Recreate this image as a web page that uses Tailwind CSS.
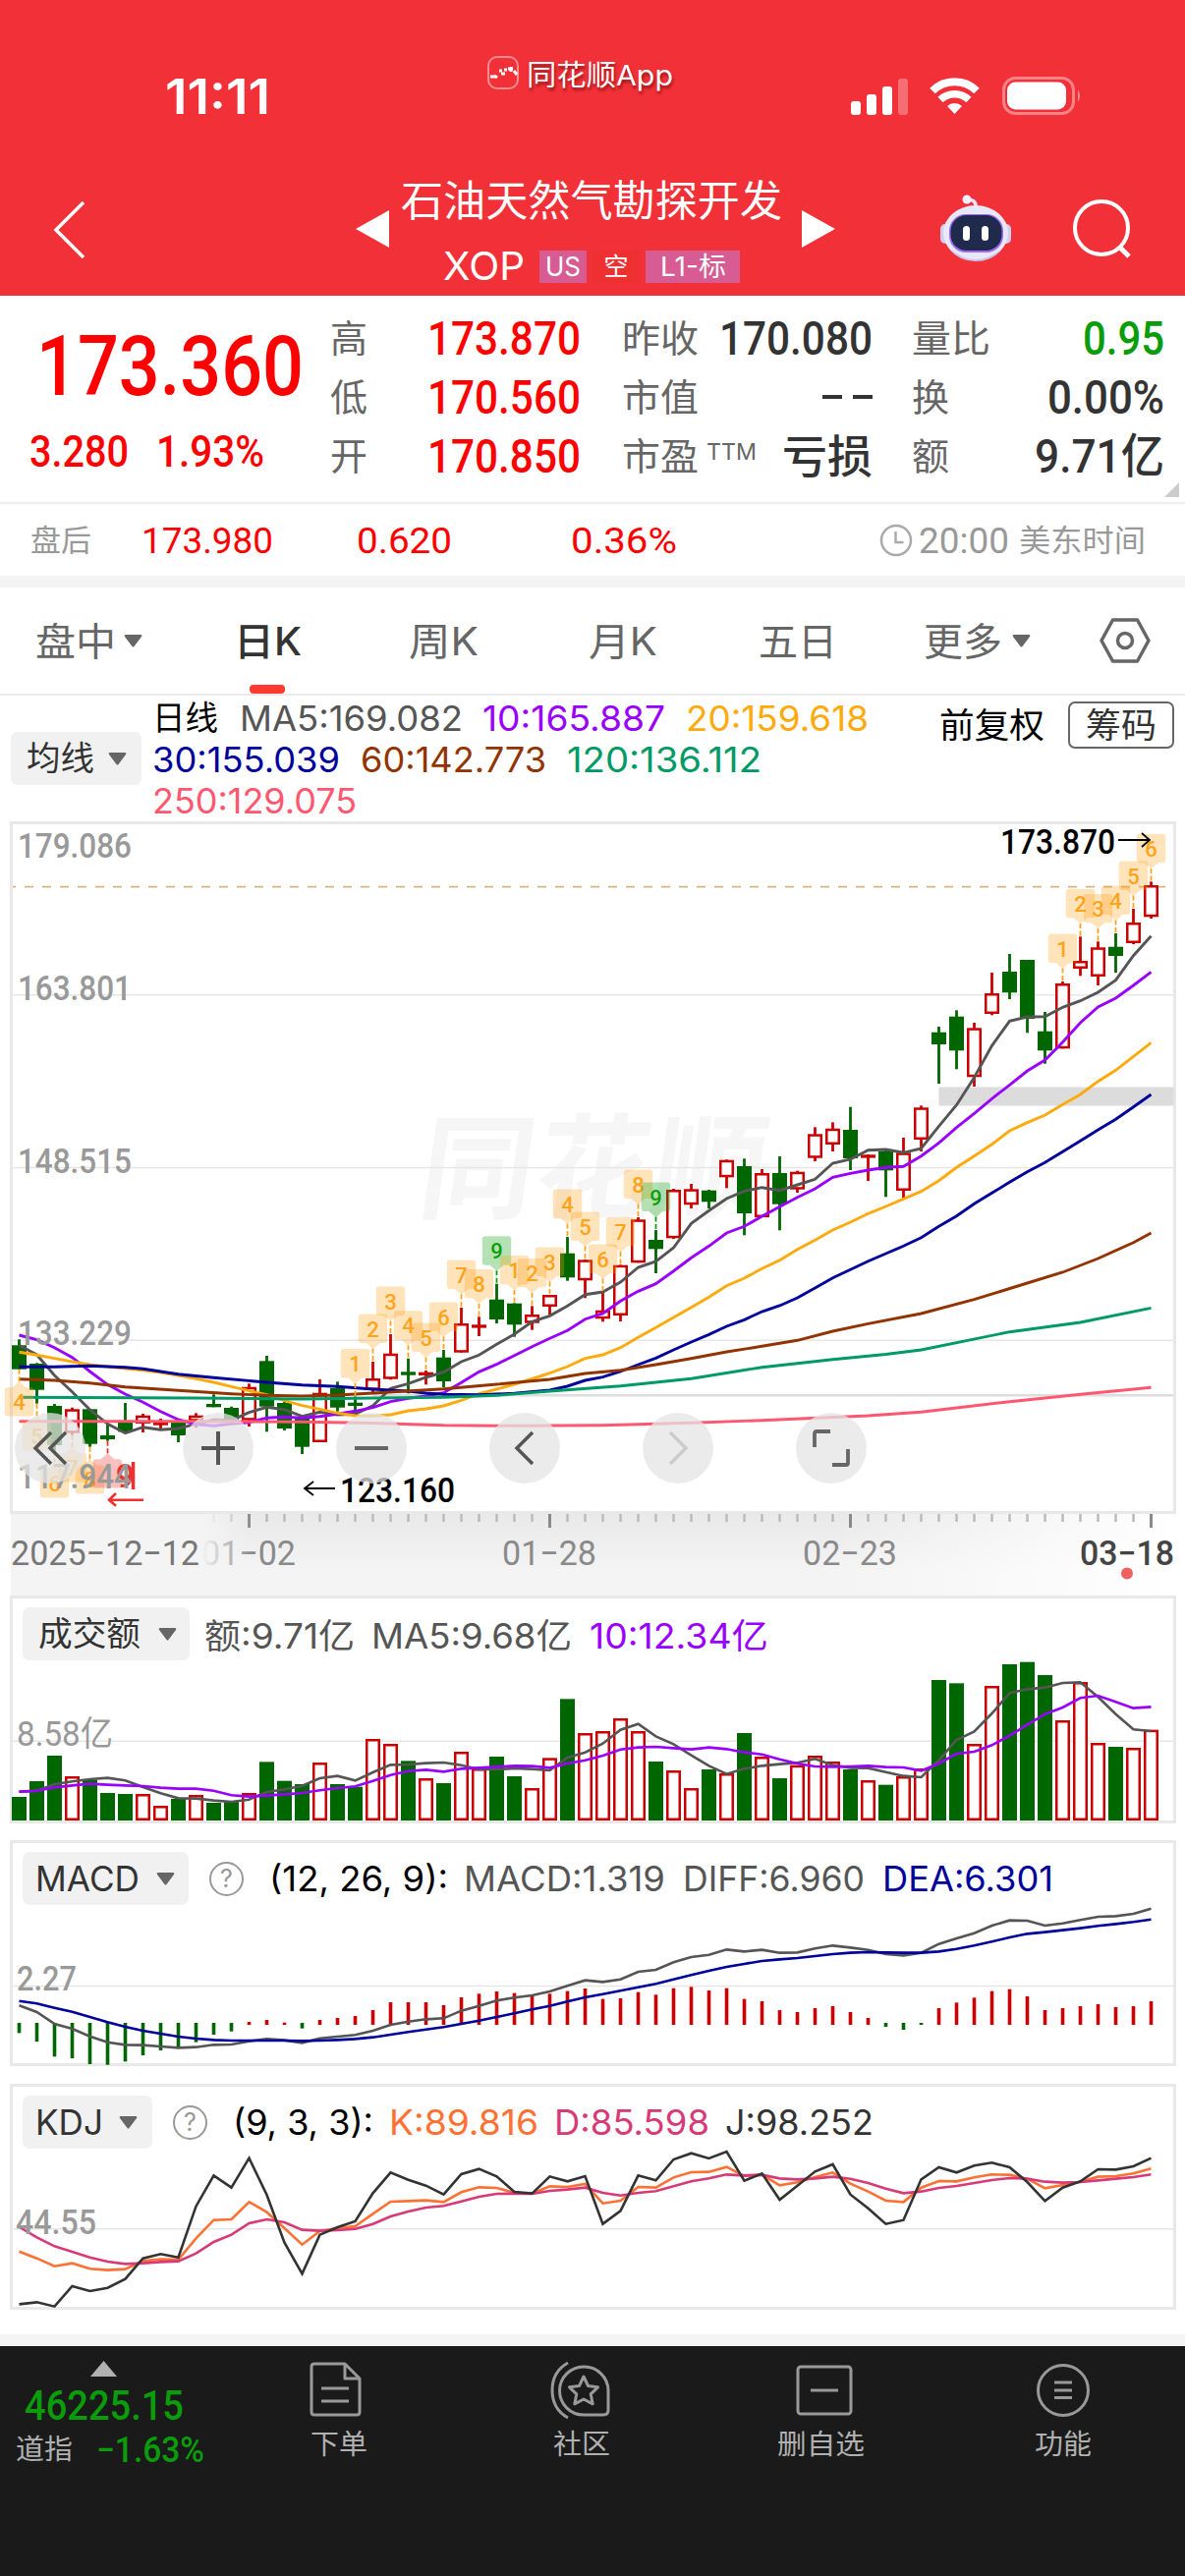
<!DOCTYPE html>
<html lang="zh-CN">
  <head>
    <meta charset="UTF-8" />
    <meta name="viewport" content="width=device-width, initial-scale=1.0" />
    <title>石油天然气勘探开发 XOP</title>
    <script src="https://cdn.jsdelivr.net/npm/@tailwindcss/browser@4"></script>
  </head>
  <body class="w-[1206px] bg-white text-[#555] leading-none whitespace-nowrap overflow-x-hidden font-['Inter','Noto_Sans_CJK_SC',sans-serif]">

    <!-- Header -->
    <header class="h-[301px] bg-[#f23038] text-white flex flex-col">
      <div class="h-[150px] flex items-start">
        <div class="ml-[168px] mt-[73px] w-[328px] text-[50px] font-semibold"><span data-w="107">11:11</span></div>
        <div class="mt-[57px] flex items-center">
          <svg width="32" height="34" viewBox="0 0 32 34" fill="none">
            <rect x="1" y="1" width="30" height="32" rx="9" stroke="#fff" stroke-opacity=".45" stroke-width="2" />
            <path d="M3 21h5M7 20l3 2M12 15h3M14 18h4M17 14h3M21 13h5M24 11v5M27 15l3 4" stroke="#fff" stroke-width="3" />
          </svg>
          <div class="ml-[8px] mt-[4px] text-[29px] [text-shadow:1px_3px_3px_rgba(90,0,0,0.6)]"><span data-w="149">同花顺App</span></div>
        </div>
        <div class="ml-[181px] mt-[78px] flex items-center">
          <svg width="58" height="38" viewBox="0 0 58 38" fill="#fff">
            <rect x="0" y="24" width="10" height="14" rx="3" />
            <rect x="16" y="17" width="10" height="21" rx="3" />
            <rect x="32" y="9" width="10" height="29" rx="3" />
            <rect x="48" y="1" width="10" height="37" rx="3" opacity=".3" />
          </svg>
          <svg class="ml-[22px]" width="51" height="38" viewBox="0 0 51 38" fill="none" stroke="#fff">
            <path d="M3 13.500A32 32 0 0 1 48 13.500" stroke-width="8" />
            <path d="M11 22.500A21 21 0 0 1 40 22.500" stroke-width="7.500" />
            <path d="M25.500 37l-7.500-8a11 11 0 0 1 15 0z" fill="#fff" stroke="none" />
          </svg>
          <svg class="ml-[23px]" width="82" height="39" viewBox="0 0 82 39">
            <rect x="1.500" y="1.500" width="71" height="36" rx="12" fill="none" stroke="#fff" stroke-opacity=".4" stroke-width="3" />
            <rect x="5" y="5.500" width="60" height="28" rx="8.500" fill="#fff" />
            <path d="M77 13q4 6.500 0 13z" fill="#fff" fill-opacity=".45" />
          </svg>
        </div>
      </div>
      <div class="h-[151px] flex">
        <svg class="ml-[54px] mt-[54px]" width="34" height="60" viewBox="0 0 34 60" fill="none" stroke="#fff" stroke-width="3.500"><path d="M31 2L3 30l28 28" /></svg>
        <svg class="ml-[274px] mt-[64px]" width="34" height="38" viewBox="0 0 34 38" fill="#fff"><path d="M34 0v38L0 19z" /></svg>
        <div class="ml-[12px] w-[388px] flex flex-col items-center">
          <div class="mt-[33px] text-[43px]"><span data-w="388">石油天然气勘探开发</span></div>
          <div class="mt-[25px] flex items-center text-[28px]">
            <span class="text-[40px] mr-[15px]" data-w="83">XOP</span>
            <div class="w-[48px] h-[33px] bg-[#d65c93] flex items-center justify-center text-[27px]"><span data-w="36">US</span></div>
            <div class="ml-[6px] w-[48px] h-[33px] bg-[#ee3030] flex items-center justify-center text-[25px]">空</div>
            <div class="ml-[6px] w-[96px] h-[33px] bg-[#d65c93] flex items-center justify-center text-[27px]"><span data-w="67">L1-标</span></div>
          </div>
        </div>
        <svg class="ml-[20px] mt-[64px]" width="34" height="38" viewBox="0 0 34 38" fill="#fff"><path d="M0 0v38l34-19z" /></svg>
        <svg class="ml-[107px] mt-[48px]" width="72" height="68" viewBox="0 0 72 68">
          <path d="M36 14c1-7-3-9-10-9" fill="none" stroke="#e6e4fa" stroke-width="3.500" />
          <circle cx="27" cy="5" r="4.500" fill="#f2f0ff" />
          <rect x="0" y="30" width="12" height="20" rx="5" fill="#cfcdf0" />
          <rect x="60" y="30" width="12" height="20" rx="5" fill="#cfcdf0" />
          <ellipse cx="36" cy="39" rx="33" ry="28" fill="#e9e8fb" />
          <path d="M8 54q28 24 56 0q-10 14-28 14t-28-14z" fill="#c8c6ee" />
          <rect x="9" y="20" width="55" height="39" rx="17" fill="#9a6bf5" />
          <rect x="10.500" y="21" width="52" height="36" rx="16" fill="#1f2a4d" />
          <rect x="23" y="32" width="7" height="15" rx="3.500" fill="#fff" />
          <rect x="42" y="32" width="7" height="15" rx="3.500" fill="#fff" />
        </svg>
        <svg class="ml-[62px] mt-[53px]" width="62" height="62" viewBox="0 0 62 62" fill="none" stroke="#fff" stroke-width="4"><circle cx="30" cy="29" r="27" /><path d="M48 48l10 10" stroke-width="5" /></svg>
      </div>
    </header>

    <!-- Quote -->
    <section class="relative h-[210px] flex text-[38px] text-[#666]">
      <div class="w-[336px] text-[#f00] font-['Roboto'] font-medium">
        <div class="pl-[37px] pt-[27px] text-[86px]"><span data-w="272">173.360</span></div>
        <div class="pl-[30px] mt-[23px] flex text-[44px]"><span data-w="101">3.280</span><span class="ml-[28px]" data-w="110">1.93%</span></div>
      </div>
      <div class="w-[255px] pt-[13px] grid grid-rows-[60px_60px_60px] items-center">
        <div class="flex justify-between items-center"><span>高</span><span class="text-[#f00] text-[48px] font-['Roboto'] font-medium" data-w="156">173.870</span></div>
        <div class="flex justify-between items-center"><span>低</span><span class="text-[#f00] text-[48px] font-['Roboto'] font-medium" data-w="156">170.560</span></div>
        <div class="flex justify-between items-center"><span>开</span><span class="text-[#f00] text-[48px] font-['Roboto'] font-medium" data-w="156">170.850</span></div>
      </div>
      <div class="ml-[42px] w-[255px] pt-[13px] grid grid-rows-[60px_60px_60px] items-center">
        <div class="flex justify-between items-center"><span data-w="78">昨收</span><span class="text-[#333] text-[48px] font-['Roboto'] font-medium" data-w="156">170.080</span></div>
        <div class="flex justify-between items-center"><span data-w="78">市值</span><span class="w-[51px] flex justify-between"><i class="w-[20px] h-[4px] bg-[#333]"></i><i class="w-[20px] h-[4px] bg-[#333]"></i></span></div>
        <div class="flex items-center"><span data-w="78">市盈</span><span class="ml-[8px] mb-[10px] text-[23px]" data-w="51">TTM</span><span class="ml-auto text-[#333] text-[46px] font-medium" data-w="92">亏损</span></div>
      </div>
      <div class="ml-[40px] w-[257px] pt-[13px] grid grid-rows-[60px_60px_60px] items-center">
        <div class="flex justify-between items-center"><span data-w="80">量比</span><span class="text-[#0a9c0a] text-[48px] font-['Roboto'] font-medium" data-w="83">0.95</span></div>
        <div class="flex justify-between items-center"><span>换</span><span class="text-[#333] text-[48px] font-['Roboto'] font-medium" data-w="119">0.00%</span></div>
        <div class="flex justify-between items-center"><span>额</span><span class="text-[#333] text-[48px] font-['Roboto','Noto_Sans_CJK_SC'] font-medium" data-w="132">9.71亿</span></div>
      </div>
      <svg class="absolute left-[1185px] top-[190px]" width="15" height="15" viewBox="0 0 15 15"><path d="M15 0v15H0z" fill="#ccc" /></svg>
    </section>

    <section class="h-[75px] border-t-2 border-[#eee] flex items-center text-[31px] text-[#999]">
      <span class="ml-[31px]" data-w="62">盘后</span>
      <span class="ml-[51px] text-[#f00] text-[37px] font-['Roboto']" data-w="134">173.980</span>
      <span class="ml-[85px] text-[#f00] text-[37px] font-['Roboto']" data-w="97">0.620</span>
      <span class="ml-[121px] text-[#f00] text-[37px] font-['Roboto']" data-w="108">0.36%</span>
      <svg class="ml-[206px]" width="34" height="34" viewBox="0 0 34 34" fill="none" stroke="#aaa" stroke-width="2.500"><circle cx="17" cy="17" r="15" /><path d="M16.500 8v11h8" /></svg>
      <span class="ml-[6px] text-[36px] font-['Roboto']" data-w="92">20:00</span>
      <span class="ml-[10px]" data-w="129">美东时间</span>
    </section>
    <div class="h-[12px] bg-[#f4f4f4]"></div>

    <!-- Period tabs -->
    <nav class="relative h-[110px] border-b-2 border-[#ebebeb] flex items-center text-[39px] text-[#666]">
      <span class="ml-[36px]" data-w="82">盘中</span>
      <svg class="ml-[8px]" width="19" height="13" viewBox="0 0 19 13" fill="#666"><path d="M2 0h15q2 0 1 2l-7.500 10q-1 1-2 0L1 2q-1-2 1-2z" /></svg>
      <span class="ml-[93px] text-[#333] font-medium" data-w="69">日K</span>
      <span class="ml-[109px]" data-w="71">周K</span>
      <span class="ml-[112px]" data-w="70">月K</span>
      <span class="ml-[103px]" data-w="80">五日</span>
      <span class="ml-[88px]" data-w="80">更多</span>
      <svg class="ml-[10px]" width="19" height="13" viewBox="0 0 19 13" fill="#666"><path d="M2 0h15q2 0 1 2l-7.500 10q-1 1-2 0L1 2q-1-2 1-2z" /></svg>
      <svg class="ml-[69px]" width="54" height="48" viewBox="0 0 54 48" fill="none" stroke="#666" stroke-width="3.500" stroke-linejoin="round"><path d="M14.500 3h25L51 24 39.500 45h-25L3 24z" /><circle cx="27" cy="24" r="7.500" /></svg>
      <div class="absolute left-[254px] bottom-0 w-[36px] h-[9px] rounded-[4px] bg-[#ff3b30]"></div>
    </nav>

    <!-- Moving average legend -->
    <section class="h-[128px] flex text-[35px]">
      <div class="ml-[11px] mt-[37px] w-[133px] h-[54px] rounded-[7px] bg-[#f1f1f1] flex items-center text-[#333] text-[34px]">
        <span class="ml-[16px]" data-w="69">均线</span>
        <svg class="ml-[14px]" width="19" height="13" viewBox="0 0 19 13" fill="#666"><path d="M2 0h15q2 0 1 2l-7.500 10q-1 1-2 0L1 2q-1-2 1-2z" /></svg>
      </div>
      <div class="ml-[11px] w-[780px] pt-[2px] grid grid-rows-[42px_42px_42px] items-center">
        <div class="flex items-center"><span class="text-black text-[34px]" data-w="67">日线</span><span class="ml-[22px]" data-w="227">MA5:169.082</span><span class="ml-[20px] text-[#90f]" data-w="186">10:165.887</span><span class="ml-[21px] text-[#ffaa0c]" data-w="186">20:159.618</span></div>
        <div class="flex items-center"><span class="text-[#00009c]" data-w="191">30:155.039</span><span class="ml-[21px] text-[#933300]" data-w="189">60:142.773</span><span class="ml-[21px] text-[#009a66]" data-w="198">120:136.112</span></div>
        <div class="flex items-center"><span class="text-[#ff5770]" data-w="208">250:129.075</span></div>
      </div>
      <span class="ml-[21px] mt-[13px] text-black" data-w="107">前复权</span>
      <div class="ml-[24px] mt-[6px] w-[108px] h-[48px] rounded-[7px] border-2 border-[#666] flex items-center justify-center text-[#333]"><span data-w="72">筹码</span></div>
    </section>

    <!-- Candles -->
    <section class="relative ml-[10px] w-[1187px] h-[705px] border-[3px] border-[#e8e8e8]">
      <svg id="kline" class="block overflow-visible" width="1181" height="699" viewBox="13 839 1181 699"></svg>
      <div class="absolute left-[2px] top-[599px] flex gap-[84px]">
        <button class="size-[72px] mr-[15px] rounded-full bg-[#e4e4e4]/75 flex items-center justify-center"><svg width="36" height="36" viewBox="0 0 36 36" fill="none" stroke="#555" stroke-width="3.500"><path d="M19 2L3 18l16 16M34 2L18 18l16 16" /></svg></button>
        <button class="size-[72px] rounded-full bg-[#e4e4e4]/75 flex items-center justify-center"><svg width="34" height="34" viewBox="0 0 34 34" stroke="#555" stroke-width="4"><path d="M0 17h34M17 0v34" /></svg></button>
        <button class="size-[72px] rounded-full bg-[#e4e4e4]/75 flex items-center justify-center"><svg width="34" height="34" viewBox="0 0 34 34" stroke="#666" stroke-width="4"><path d="M0 17h34" /></svg></button>
        <button class="size-[72px] rounded-full bg-[#e4e4e4]/75 flex items-center justify-center"><svg width="22" height="36" viewBox="0 0 22 36" fill="none" stroke="#555" stroke-width="3.500"><path d="M19 2L3 18l16 16" /></svg></button>
        <button class="size-[72px] rounded-full bg-[#e4e4e4]/75 flex items-center justify-center"><svg width="22" height="36" viewBox="0 0 22 36" fill="none" stroke="#ccc" stroke-width="3.500"><path d="M3 2l16 16L3 34" /></svg></button>
        <button class="size-[72px] rounded-full bg-[#e4e4e4]/75 flex items-center justify-center"><svg width="38" height="38" viewBox="0 0 38 38" fill="none" stroke="#666" stroke-width="3.800"><path d="M2 18V4q0-2 2-2h14M20 36h14q2 0 2-2V20" /></svg></button>
      </div>
    </section>

    <!-- Time axis -->
    <section class="ml-[10px] w-[1187px] h-[83px]">
      <svg id="axis" class="block" width="1187" height="83" viewBox="10 1541 1187 83"></svg>
    </section>

    <!-- Turnover -->
    <section class="ml-[10px] w-[1187px] h-[232px] border-[3px] border-[#e8e8e8] text-[35px]">
      <div class="h-[65px] pl-[10px] pt-[9px] flex">
        <div class="w-[170px] h-[54px] rounded-[7px] bg-[#f1f1f1] flex items-center text-[#333] text-[34px]">
          <span class="ml-[16px]" data-w="104">成交额</span>
          <svg class="ml-[18px]" width="19" height="13" viewBox="0 0 19 13" fill="#666"><path d="M2 0h15q2 0 1 2l-7.500 10q-1 1-2 0L1 2q-1-2 1-2z" /></svg>
        </div>
        <div class="ml-[15px] h-[58px] flex items-center"><span data-w="153">额:9.71亿</span><span class="ml-[17px]" data-w="204">MA5:9.68亿</span><span class="ml-[18px] text-[#90f]" data-w="182">10:12.34亿</span></div>
      </div>
      <svg id="vol" class="block overflow-visible" width="1181" height="161" viewBox="13 1692 1181 161"></svg>
    </section>

    <!-- MACD -->
    <section class="ml-[10px] mt-[17px] w-[1187px] h-[230px] border-[3px] border-[#e8e8e8] text-[35px]">
      <div class="h-[64px] pl-[10px] pt-[9px] flex">
        <div class="w-[169px] h-[54px] rounded-[7px] bg-[#f1f1f1] flex items-center text-[#333]">
          <span class="ml-[13px]" data-w="106">MACD</span>
          <svg class="ml-[17px]" width="19" height="13" viewBox="0 0 19 13" fill="#666"><path d="M2 0h15q2 0 1 2l-7.500 10q-1 1-2 0L1 2q-1-2 1-2z" /></svg>
        </div>
        <div class="ml-[21px] h-[54px] flex items-center">
          <div class="size-[35px] rounded-full border-[2.500px] border-[#999] text-[#999] text-[25px] flex items-center justify-center">?</div>
          <span class="ml-[26px] text-black" data-w="182">(12, 26, 9):</span><span class="ml-[16px]" data-w="205">MACD:1.319</span><span class="ml-[18px]" data-w="185">DIFF:6.960</span><span class="ml-[18px] text-[#00009c]" data-w="174">DEA:6.301</span>
        </div>
      </div>
      <svg id="macd" class="block overflow-visible" width="1181" height="160" viewBox="13 1939 1181 160"></svg>
    </section>

    <!-- KDJ -->
    <section class="ml-[10px] mt-[18px] w-[1187px] h-[230px] border-[3px] border-[#e8e8e8] text-[35px]">
      <div class="h-[64px] pl-[10px] pt-[9px] flex">
        <div class="w-[132px] h-[54px] rounded-[7px] bg-[#f1f1f1] flex items-center text-[#333]">
          <span class="ml-[13px]" data-w="69">KDJ</span>
          <svg class="ml-[16px]" width="19" height="13" viewBox="0 0 19 13" fill="#666"><path d="M2 0h15q2 0 1 2l-7.500 10q-1 1-2 0L1 2q-1-2 1-2z" /></svg>
        </div>
        <div class="ml-[21px] h-[54px] flex items-center">
          <div class="size-[35px] rounded-full border-[2.500px] border-[#999] text-[#999] text-[25px] flex items-center justify-center">?</div>
          <span class="ml-[26px] text-black" data-w="143">(9, 3, 3):</span><span class="ml-[16px] text-[#ff7033]" data-w="152">K:89.816</span><span class="ml-[16px] text-[#d83a78]" data-w="158">D:85.598</span><span class="ml-[16px] text-[#333]" data-w="151">J:98.252</span>
        </div>
      </div>
      <svg id="kdj" class="block overflow-visible" width="1181" height="160" viewBox="13 2188 1181 160"></svg>
    </section>
    <div class="mt-[25px] h-[12px] bg-[#f4f4f4]"></div>

    <!-- Bottom bar -->
    <footer class="h-[234px] bg-[#1a1a1a] text-[#b0b0b0] text-[28px] flex">
      <div class="w-[224px] pt-[15px]">
        <svg class="ml-[92px]" width="27" height="16" viewBox="0 0 27 16" fill="#b0b0b0"><path d="M13.500 0L27 16H0z" /></svg>
        <div class="mt-[8px] ml-[25px] h-[42px] text-[42px] font-['Roboto'] font-medium text-[#0a9c0a]"><span data-w="162">46225.15</span></div>
        <div class="mt-[6px] ml-[16px] flex items-center"><span data-w="58">道指</span><span class="ml-[24px] text-[36px] font-['Roboto'] font-medium text-[#0a9c0a]" data-w="110">−1.63%</span></div>
      </div>
      <div class="w-[241px] flex flex-col items-center">
        <svg class="mt-[14px] -ml-[6px]" width="54" height="60" viewBox="0 0 54 60" fill="none" stroke="#999" stroke-width="3" stroke-linejoin="round"><path d="M36 4H5q-3 0-3 3v46q0 3 3 3h43q3 0 3-3V19L36 4v15h15M12 29h28M12 42h28" /></svg>
        <span class="mt-[12px]" data-w="58">下单</span>
      </div>
      <div class="w-[254px] flex flex-col items-center">
        <svg class="mt-[14px] -ml-[4px]" width="64" height="62" viewBox="0 0 64 62" fill="none" stroke="#999" stroke-width="3" stroke-linejoin="round"><path d="M20 3Q4 12 4 31t16 28M36 7a24.500 24.500 0 0 1 25 24v20q0 5-5 5H36a24.500 24.500 0 0 1 0-49z" /><path d="M36 17l4.500 9.500 10 1.300-7.300 7 2 10L36 40l-9.200 4.800 2-10-7.300-7 10-1.300z" /></svg>
        <span class="mt-[10px]" data-w="58">社区</span>
      </div>
      <div class="w-[233px] flex flex-col items-center">
        <svg class="mt-[17px] ml-[6px]" width="60" height="56" viewBox="0 0 60 56" fill="none" stroke="#999" stroke-width="3"><rect x="3" y="4" width="54" height="48" rx="3" /><path d="M16 28h28" /></svg>
        <span class="mt-[13px]" data-w="89">删自选</span>
      </div>
      <div class="w-[254px] flex flex-col items-center pl-[6px]">
        <svg class="mt-[17px]" width="56" height="56" viewBox="0 0 56 56" fill="none" stroke="#999" stroke-width="3"><circle cx="28" cy="28" r="25.500" /><path d="M19 20h18M19 28h18M19 35.500h18" /></svg>
        <span class="mt-[13px]" data-w="58">功能</span>
      </div>
    </footer>

    <script>
      const X = (i) => 19.5 + 18 * i; // center of day i
      const RED = '#cc0000', GREEN = '#006600';

      // color, high, body top, body bottom, low
      const candles = [
        ['g',1363.3,1369.3,1393.7,1393.7],['g',1387.3,1388,1414.7,1428.7],['g',1429,1431,1471,1476.7],['r',1432.7,1434.3,1458.7,1460.7],['g',1434.3,1434.3,1469.7,1472.7],
        ['g',1449.3,1461,1465,1466.7],['g',1428,1446.7,1457.3,1458],['r',1439,1440.7,1449,1458],['r',1444,1446,1450.7,1454.3],['g',1446.7,1446.7,1461,1468],
        ['r',1438.3,1440.7,1446.7,1453.3],['g',1419.3,1429,1432.3,1432.3],['g',1431.7,1433,1446,1450],['r',1408.3,1411.7,1445.7,1452],['g',1380,1385.3,1431.7,1457.3],
        ['g',1426.7,1428,1454,1456],['g',1441.7,1443.3,1472.7,1480],['r',1404,1417.7,1468,1468],['g',1406.3,1413,1432.7,1436.7],['g',1421.4,1427.7,1431,1438.3],
        ['r',1386,1403,1415,1417.3],['r',1358,1377.7,1403.7,1404.3],['g',1382.7,1396.3,1399.7,1418.3],['r',1395,1396.7,1399.7,1409.3],['g',1374,1381.7,1406,1412],
        ['r',1331,1347,1376.7,1376.7],['r',1340.3,1348.3,1351.3,1360],['g',1306.7,1322.7,1343,1347],['g',1326.4,1326.7,1348.3,1360.7],['r',1329.3,1338,1346.7,1353.7],
        ['r',1318,1318,1330,1338],['g',1259,1275.7,1300.3,1303.7],['r',1282,1282.3,1303.3,1321.3],['r',1315,1333.7,1342.3,1345.3],['r',1287.4,1287.7,1339,1345],
        ['r',1239,1241.3,1285.3,1285.3],['g',1252,1262,1271.3,1296],['r',1210,1211,1260.3,1261],['r',1205,1210.3,1226.3,1230],['g',1211,1211.7,1223.3,1230],
        ['r',1180.3,1180.7,1198.3,1209.3],['g',1179.3,1187,1235,1257.3],['r',1190,1194,1239,1239],['g',1177,1194,1225.7,1252.3],['r',1191.7,1192.7,1210.7,1214],
        ['r',1147.3,1154.3,1178.7,1182],['r',1142.3,1148.7,1165,1172],['g',1126.7,1150,1179,1191],['r',1175,1175.3,1178.3,1202],['g',1171,1171.7,1191.3,1218.3],
        ['r',1158,1173.3,1212,1220],['r',1125.3,1127.3,1160,1172],['g',1045,1050.7,1063,1103],['g',1028.3,1034.7,1069.3,1088.3],['r',1041,1046.3,1096.3,1106],
        ['r',990,1011,1032,1033.3],['g',971,989,1010.3,1017],['g',977,977,1037,1051.3],['g',1030,1049.7,1069.3,1082.7],['r',999,1001,1067.3,1067.3],
        ['r',953.3,978,986,993.3],['r',958.3,964.3,994,1003],['g',950,963.7,973,990],['r',925,939,960,961],['r',897.3,901,933.3,935],
      ];

      const ma5 = [1369.3,1379,1400,1416.7,1435,1449.3,1458.7,1452.7,1455.3,1454,1449.3,1445,1445.7,1437.7,1432.3,1434.7,1441.7,1437.3,1440,1439.3,1430.7,1413.3,1408.3,1402,1396.7,1386,1379.3,1368.3,1358,1345.3,1339.3,1329.3,1317.7,1315,1305,1290,1284,1270,1245.3,1232.3,1220,1212.3,1208.7,1211.7,1206,1200.3,1184,1180,1170.7,1170,1173.3,1169,1146.3,1124.7,1096.7,1064.3,1039.3,1035,1034.7,1025.3,1018.7,1010,997.7,972.7,952.7];
      const ma10 = [1359,1363.7,1371.7,1381.7,1396,1409.3,1419,1427.3,1436.7,1445,1449.7,1451.3,1449.3,1447.7,1443.3,1442.3,1443.3,1441.7,1439.3,1436.3,1432.7,1426.7,1423.3,1421,1417.7,1407.3,1396.3,1388.7,1379.7,1370.7,1362.3,1354.3,1342.7,1337,1324.3,1314.3,1306.7,1293.7,1280.3,1268.3,1255,1248.3,1238,1228.3,1218.7,1210,1198.3,1194.3,1191,1188.3,1187.3,1176.7,1163.3,1147.7,1133.3,1118.3,1104.3,1090,1079,1060.7,1041,1025,1016,1003,989.3];
      const ma20 = [1376.3,1379.3,1382.7,1386,1389,1391,1393,1394.7,1397,1400,1403.3,1407,1411.3,1415.7,1419.7,1425.7,1430.7,1434.3,1438.3,1441,1441.3,1440,1436,1434,1431,1425.3,1418.7,1414,1409,1403.5,1397.7,1391,1382.7,1379,1371.7,1361.3,1351.3,1341,1330.7,1320.3,1308.7,1301,1291.3,1282.7,1271.7,1262.3,1252,1244,1235.3,1228,1220.3,1212.7,1201.7,1188.3,1176.7,1164.7,1151,1142.7,1135,1124.3,1114,1100.7,1089.3,1075.3,1061.3];
      // slower averages as [day, y]
      const ma30 = [[0,1391.3],[2,1391.3],[4,1390.3],[6,1391.7],[7,1393.3],[9,1398.7],[11,1402.3],[14,1407],[16,1409.7],[18,1411.3],[20,1414],[22,1416],[23,1418],[24,1419.3],[26,1419.7],[28,1418.3],[30,1415],[31,1411],[32,1405],[33,1401.7],[34,1396],[35,1389],[36,1382.3],[37,1374],[38,1366],[39,1358.3],[40,1350],[41,1343.3],[42,1335],[43,1329],[44,1321],[45,1311],[46,1300.7],[47,1292.3],[48,1283.7],[49,1276],[50,1268.3],[51,1259.7],[52,1248.3],[53,1237.7],[54,1225.3],[55,1214.3],[56,1203.3],[57,1192.7],[58,1183.3],[59,1172.3],[60,1161.3],[61,1150],[62,1139.3],[63,1126.7],[64,1114]];
      const ma60 = [[0,1403.7],[2,1405],[4,1407.7],[6,1411.7],[9,1415.3],[12,1418.7],[14,1420.3],[16,1421],[18,1420],[20,1418],[24,1413.7],[27,1409],[30,1404],[32,1398],[34,1394.7],[36,1389],[38,1382.7],[40,1376],[42,1370.3],[44,1364.3],[46,1355],[48,1347.3],[51,1337],[54,1322.7],[57,1306],[59,1295],[61,1281],[63,1264.7],[64,1255]];
      const ma120 = [[0,1422.3],[10,1423],[16,1424],[20,1423],[24,1422.3],[27,1420.3],[30,1416],[34,1410.7],[38,1403.3],[42,1391.7],[46,1383.7],[49,1378.5],[51,1374],[56,1355.7],[60,1346],[64,1331.3]];
      const ma250 = [[0,1446.7],[10,1446.7],[16,1447.3],[20,1448.5],[24,1450.7],[28,1451.3],[33,1450.7],[38,1448.3],[42,1445.7],[48,1441],[51,1437.3],[56,1426.7],[60,1419.3],[64,1412.3]];

      const line = (pts, color, w = 2.9) => `<polyline points="${pts.map((p) => X(p[0]) + ',' + p[1]).join(' ')}" fill="none" stroke="${color}" stroke-width="${w}" />`;
      const full = (arr) => arr.map((y, i) => [i, y]);
      const rule = (y, c = '#e6e6e6', w = 1.5, x1 = 13) => `<path d="M${x1} ${y}H1194" stroke="${c}" stroke-width="${w}" />`;
      const label = (x, y, w, t, c = '#999', size = 35, weight = 500, anchor = 'start') =>
        `<text x="${x}" y="${y}" textLength="${w}" lengthAdjust="spacingAndGlyphs" font-family="Roboto, 'Noto Sans CJK SC', sans-serif" font-size="${size}" font-weight="${weight}" fill="${c}" text-anchor="${anchor}">${t}</text>`;

      function bar(i, top, bottom, color) {
        const x = X(i) - 7.5;
        if (color === 'g') return `<rect x="${x}" y="${top}" width="15" height="${bottom - top}" fill="${GREEN}" />`;
        return `<rect x="${x + 1.25}" y="${top + 1.25}" width="12.5" height="${Math.max(bottom - top - 2.5, 0.8)}" fill="#fff" stroke="${RED}" stroke-width="2.5" />`;
      }

      // numbered tag: above the high, or below the low when down is set
      function tag(i, n, color = '#ffa31a', down = false) {
        const c = candles[i];
        const x = X(i);
        const top = down ? c[4] + 18.5 : c[1] - 48.4;
        const tip = down ? `M${x - 7} ${top}l7-6 7 6z` : `M${x - 7} ${top + 29.4}l7 6 7-6z`;
        const dash = down ? `M${x} ${c[4]}V${top - 6}` : `M${x} ${top + 35}V${c[1]}`;
        return `<rect x="${x - 14.7}" y="${top}" width="29.4" height="29.4" rx="3" fill="${color}" fill-opacity=".3" />
          <path d="${tip}" fill="${color}" fill-opacity=".3" /><path d="${dash}" stroke="${color}" stroke-width="1.8" stroke-dasharray="5 2.5" />
          <text x="${x}" y="${top + 23}" font-family="Roboto" font-size="22" font-weight="500" fill="${color}" text-anchor="middle">${n}</text>`;
      }

      function drawKline() {
        let s = `<text x="424" y="1231" textLength="352" font-family="'Noto Sans CJK SC'" font-size="116" font-weight="700" fill="#f6f6f6" transform="translate(172 0) skewX(-8)">同花顺</text>`;
        s += [1012.7, 1188.5, 1364.3].map((y) => rule(y)).join('');
        s += rule(1420.3, '#dddddd', 2.6, 380);
        s += `<rect x="955.5" y="1106.5" width="239" height="19" fill="#dcdcdc" />`;
        s += `<path d="M13 902.7H1194" stroke="#d9b482" stroke-width="1.8" stroke-dasharray="9 9" stroke-dashoffset="6" />`;
        candles.forEach((c, i) => {
          const col = c[0] === 'g' ? GREEN : RED;
          s += `<path d="M${X(i)} ${c[1]}V${c[4]}" stroke="${col}" stroke-width="2.8" />` + bar(i, c[2], c[3], c[0]);
        });
        s += line(full(ma5), '#555555') + line(full(ma10), '#9900ff') + line(full(ma20), '#ffaa0c');
        s += line(ma30, '#00009c') + line(ma60, '#933300') + line(ma120, '#009a66') + line(ma250, '#ff5770');
        [[0, 4], [1, 5], [2, 6], [3, 7], [4, 8]].forEach((t) => { s += tag(t[0], t[1], '#ffa31a', true); });
        s += tag(5, '', '#f03030', true);
        s += `<text x="137" y="1514" font-family="Roboto" font-size="34" font-weight="500" fill="#f03030" text-anchor="end">9</text><path d="M135.500 1488V1516" stroke="#f03030" stroke-width="3.500" />`;
        s += `<path d="M146 1526.700H111M118 1520l-7 6.700 7 6" fill="none" stroke="#f03030" stroke-width="2.600" />`;
        [1, 2, 3, 4, 5, 6, 7, 8, 9, 1, 2, 3, 4, 5, 6, 7, 8, 9].forEach((n, k) => { s += tag(19 + k, n, n === 9 ? '#0aa00a' : '#ffa31a'); });
        [1, 2, 3, 4, 5, 6].forEach((n, k) => { s += tag(59 + k, n); });
        s += label(18, 873, 116, '179.086') + label(18, 1018, 116, '163.801') + label(18, 1193.5, 116, '148.515') + label(18, 1369, 116, '133.229') + label(18, 1515, 116, '117.944');
        s += label(1018, 868.5, 117, '173.870', '#000') + label(346, 1528.500, 117, '123.160', '#000');
        s += `<path d="M1138 855H1169M1162 848l8 7-8 7M341 1515H310M319 1508l-9 7 9 7" fill="none" stroke="#000" stroke-width="1.800" />`;
        document.getElementById('kline').innerHTML = s;
      }

      function drawAxis() {
        let s = `<defs>
          <linearGradient id="down" x2="0" y2="1"><stop offset="0" stop-color="#e9e9e9" /><stop offset=".7" stop-color="#f4f4f4" /></linearGradient>
          <linearGradient id="right"><stop offset="0" stop-color="#fff" stop-opacity="0" /><stop offset="1" stop-color="#fff" /></linearGradient>
          <linearGradient id="left"><stop offset="0" stop-color="#f4f4f4" /><stop offset="1" stop-color="#f4f4f4" stop-opacity="0" /></linearGradient></defs>`;
        s += `<rect x="11" y="1541" width="1185" height="83" fill="url(#down)" /><rect x="850" y="1541" width="346" height="83" fill="url(#right)" />`;
        for (let i = 11; i <= 64; i++) {
          const major = i % 17 === 13;
          s += `<path d="M${X(i)} 1541v${major ? 14 : 8}" stroke="${major ? '#8a8a8a' : '#bbbbbb'}" stroke-width="${major ? 3 : 2.5}" />`;
        }
        s += label(253, 1592.5, 96, '01−02', '#8a8a8a', 35, 400, 'middle') + label(559, 1592.5, 96, '01−28', '#8a8a8a', 35, 400, 'middle') + label(865, 1592.5, 96, '02−23', '#8a8a8a', 35, 400, 'middle');
        s += `<rect x="11" y="1541" width="195" height="83" fill="#f4f4f4" /><rect x="206" y="1541" width="50" height="83" fill="url(#left)" />`;
        s += label(11, 1592.5, 192, '2025−12−12', '#777777', 35, 400) + label(1099, 1592.5, 96, '03−18', '#444444');
        s += `<circle cx="1147" cy="1601.500" r="6" fill="#f06262" />`;
        document.getElementById('axis').innerHTML = s;
      }

      // the indicator series below are in thirds of a pixel from the base of each panel
      const px = (base, arr) => arr.map((v, i) => [i, base + v / 3]);

      const volTop = [687,639,561,624,635,675,678,678,714,693,681,705,700,675,580,638,648,582,648,656,510,525,577,630,645,549,600,564,624,660,568,388,492,486,447,486,579,606,660,603,615,492,564,630,590,561,579,603,636,650,624,600,330,340,525,348,282,275,315,453,336,522,534,537,482];
      const volColor = 'gggrgggrrgrggrgggrggrrgrgrrggrrgrrrrgrrgrgrgrrrgrgrrggrrgggrrrgrr';
      const vol5 = [671,668,648,640,633,629,637,657,676,691,692,698,702,695,672,664,653,630,623,637,612,589,588,584,582,590,603,603,600,602,606,567,551,524,482,464,502,526,560,592,617,601,592,587,583,571,590,598,599,611,623,627,575,513,487,432,370,358,353,339,337,382,434,481,486];
      const vol10 = [671,669,658,652,647,650,652,654,659,662,662,668,682,686,683,679,675,667,660,655,638,620,608,604,610,601,598,595,592,593,598,585,575,561,542,536,534,538,542,536,541,551,557,572,585,594,595,594,592,596,597,607,585,555,549,529,500,467,434,414,385,378,397,416,412];

      function drawVolume() {
        let s = rule(1772.3);
        volTop.forEach((v, i) => { s += bar(i, 1600 + v / 3, 1853, volColor[i]); });
        s += line(px(1600, vol5), '#555555', 2.6) + line(px(1600, vol10), '#9900ff', 2.6);
        s += label(17, 1776.5, 98, '8.58亿', '#999', 35, 400);
        document.getElementById('vol').innerHTML = s;
      }

      const diff = [541,561,597,612,635,653,661,662,666,670,668,661,660,650,643,647,655,641,636,631,618,600,590,583,580,557,542,526,517,510,498,481,464,469,461,438,432,409,393,386,370,376,371,380,379,367,358,364,371,384,388,380,353,336,320,297,281,282,297,290,280,270,268,261,245];
      const dea = [527,535,548,560,576,592,606,618,627,636,642,646,648,648,648,648,649,648,646,643,638,630,622,614,607,597,587,576,565,553,542,529,516,506,496,485,475,461,448,435,423,414,405,400,396,390,384,380,378,379,380,380,376,368,358,346,333,322,317,311,305,298,292,286,278];
      const hist = [625,651,697,702,720,722,712,693,678,666,653,630,620,591,585,593,611,585,579,573,555,531,531,531,540,516,505,498,503,512,505,497,489,521,519,500,508,488,484,495,488,521,528,555,561,549,543,561,579,606,615,600,549,532,517,497,491,513,555,549,543,537,546,543,528];

      function drawMacd() {
        let s = rule(2020.5);
        hist.forEach((v, i) => {
          const up = v < 597;
          s += `<path d="M${X(i)} ${up ? 2060 : 2058}V${1860 + v / 3}" stroke="${up ? RED : GREEN}" stroke-width="3.6" />`;
        });
        s += line(px(1860, diff), '#555555', 2.6) + line(px(1860, dea), '#00009c', 2.6);
        s += label(17, 2025, 61, '2.27');
        document.getElementById('macd').innerHTML = s;
      }

      const kLine = [545,566,590,581,598,602,599,574,569,570,505,449,447,394,425,474,524,483,473,468,430,393,391,389,394,364,349,351,366,368,346,348,339,398,390,348,350,319,303,302,287,315,311,343,334,318,304,338,362,390,394,350,330,331,319,310,311,323,352,342,332,317,315,307,292];
      const dLine = [470,502,529,546,563,576,583,581,577,575,551,516,494,459,447,456,479,482,480,476,461,438,423,411,406,392,378,369,368,369,360,356,350,366,374,366,361,346,331,322,310,313,311,322,325,322,317,323,336,353,367,362,351,345,336,327,321,323,332,335,333,328,323,318,310];
      const jLine = [706,700,713,651,666,656,629,566,553,563,407,313,350,260,372,518,613,494,471,453,367,304,326,344,371,309,293,316,363,368,316,331,315,461,421,313,328,264,245,261,240,329,307,387,344,301,279,371,413,461,449,325,288,304,283,274,288,333,391,350,331,294,295,285,260];

      function drawKdj() {
        let s = rule(2268.7);
        s += line(px(2110, kLine), '#ff7033', 2.6) + line(px(2110, dLine), '#d83a78', 2.6) + line(px(2110, jLine), '#333333', 2.6);
        s += label(16, 2273.5, 82, '44.55');
        document.getElementById('kdj').innerHTML = s;
      }

      // squeeze each text to its column width
      function fitText() {
        document.querySelectorAll('[data-w]').forEach((el) => {
          const w = el.dataset.w;
          el.style.display = 'block';
          el.style.flexShrink = 0;
          el.style.width = w + 'px';
          el.innerHTML = `<svg width="${w}" style="display:block;height:1em;overflow:visible"><text y="0.86em" textLength="${w}" lengthAdjust="spacingAndGlyphs" fill="currentColor">${el.textContent}</text></svg>`;
        });
      }

      drawKline();
      drawAxis();
      drawVolume();
      drawMacd();
      drawKdj();
      fitText();
    </script>
  </body>
</html>
